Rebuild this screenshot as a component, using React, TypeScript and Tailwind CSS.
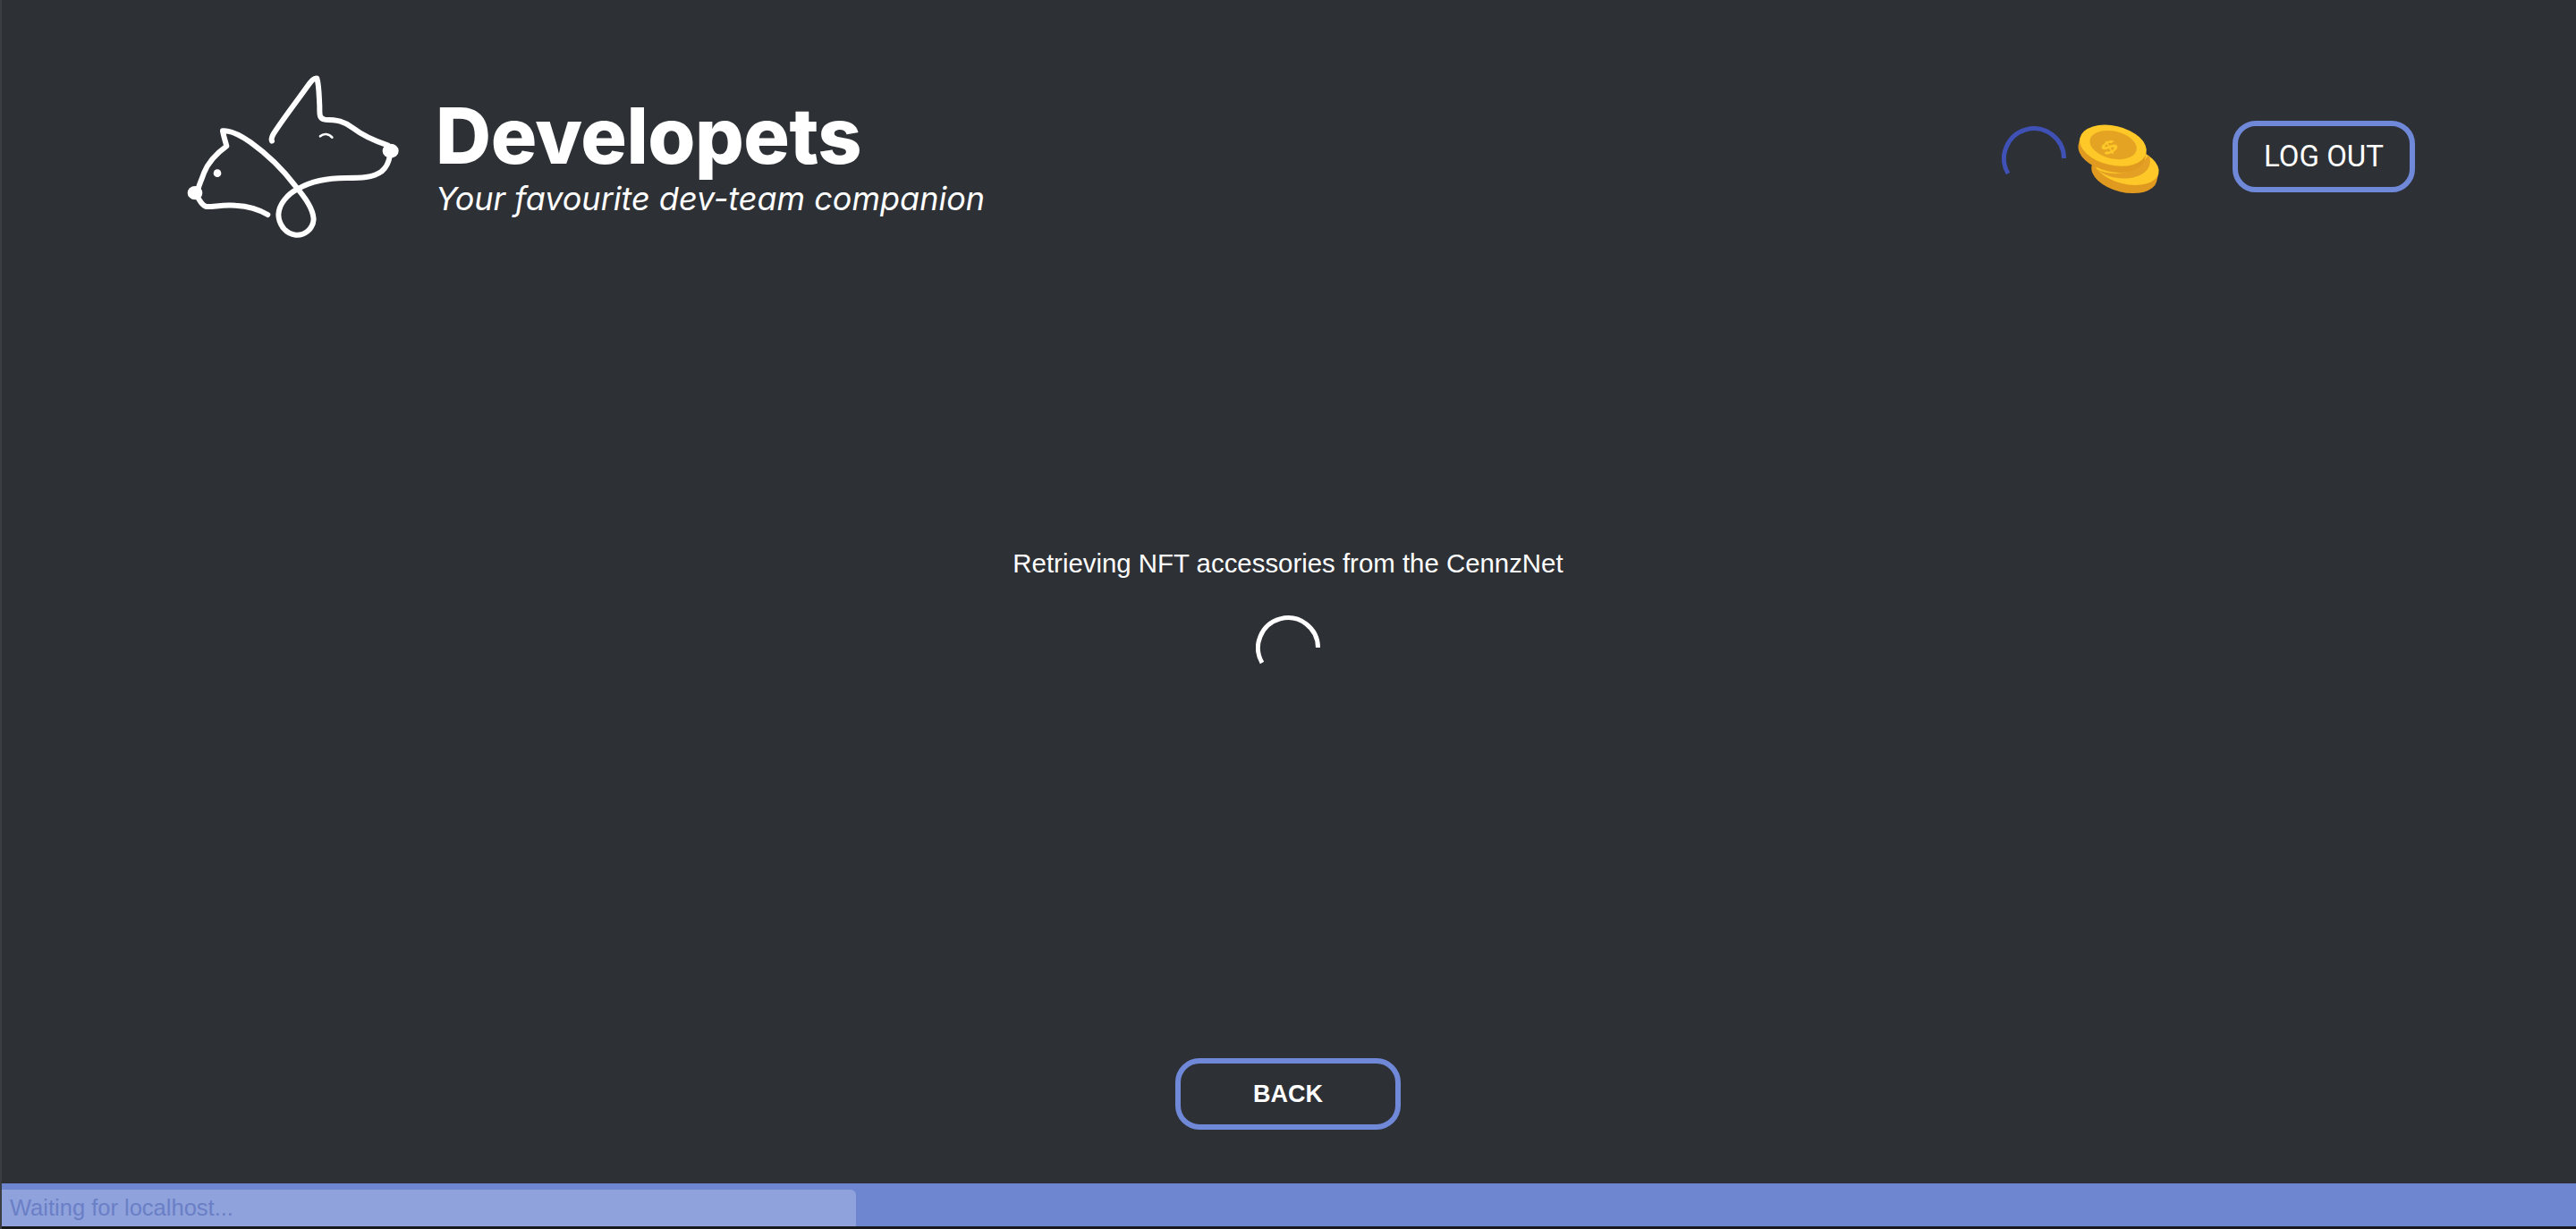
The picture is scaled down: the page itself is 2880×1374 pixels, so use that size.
import React from 'react';

const Logo = () => (
  <svg width="260" height="200" viewBox="0 0 780 600" fill="none" stroke="#fff" strokeLinecap="round" strokeLinejoin="round">
    <path
      d="M298 495C270 478 230 466 190 464C150 461 110 470 92 468C78 465 68 445 60 430C62 405 74 385 84 355C96 325 125 290 160 265C155 245 148 225 147 214C170 212 205 228 240 252C300 295 350 345 390 398C425 440 450 475 452 510C450 545 420 565 392 563C360 560 335 530 334 495C335 460 365 425 400 408C440 385 490 372 560 372C610 372 650 372 680 350C698 335 705 315 708 295"
      strokeWidth="18"
    />
    <path
      d="M700 262C665 250 620 232 585 205C555 182 530 176 490 176C470 172 472 160 472 130C470 95 470 60 463 38C455 35 445 45 430 66C390 122 345 180 316 226C310 238 310 244 312 248"
      strokeWidth="18"
    />
    <path d="M474 232C485 222 503 222 514 236" strokeWidth="8" />
    <circle cx="129" cy="356" r="13" fill="#fff" stroke="none" />
    <ellipse cx="54" cy="422" rx="25" ry="23" fill="#fff" stroke="none" />
    <ellipse cx="710" cy="281" rx="27" ry="24" fill="#fff" stroke="none" />
  </svg>
);

const Spinner = ({ color, width }: { color: string; width: number }) => (
  <svg width="72" height="72" viewBox="0 0 72 72" fill="none">
    <path d="M69.5 36A33.5 33.5 0 1 0 7 53" stroke={color} strokeWidth={width} />
  </svg>
);

const Coins = () => (
  <svg width="100" height="90" viewBox="0 0 300 270" fill="none">
    {/* back coin */}
    <g transform="rotate(14 170 170)">
      <path d="M58 165v28a112 62 0 0 0 224 0v-28z" fill="#e09a20" />
      <ellipse cx="170" cy="165" rx="112" ry="62" fill="#fdc828" />
    </g>
    <path d="M72 178C130 205 205 195 246 130C262 160 245 200 180 208C135 212 100 200 72 178Z" fill="#e3a024" />
    {/* front coin */}
    <g transform="rotate(13 127 100)">
      <path d="M13 98v22a114 66 0 0 0 228 0v-22z" fill="#e09a20" />
      <ellipse cx="127" cy="98" rx="114" ry="66" fill="#fdc828" />
      <ellipse cx="127" cy="96" rx="80" ry="46" fill="#e5a323" />
    </g>
    <text
      transform="translate(125 122) rotate(-30) scale(1.35 0.85)"
      fill="#fdc828"
      fontFamily="'Liberation Sans', sans-serif"
      fontWeight="700"
      fontSize="70"
      textAnchor="middle"
    >
      $
    </text>
  </svg>
);

export default function App() {
  return (
    <div className="flex h-screen flex-col overflow-hidden border-l-2 border-l-[#3a3d42] bg-[#2d3035] font-['Liberation_Sans',sans-serif] text-white">
      <header className="flex items-start justify-between pl-[198px] pr-[180px] pt-[75px]">
        <div className="flex items-start gap-[27px]">
          <Logo />
          <div className="pt-[29px]">
            <h1 className="font-['Inter',sans-serif] text-[86px] font-extrabold leading-[96px] tracking-[-0.5px]">Developets</h1>
            <p className="font-['Inter',sans-serif] text-[36px] italic leading-[44px]">Your favourite dev-team companion</p>
          </div>
        </div>
        <div className="flex items-center pt-[55px]">
          <div className="translate-y-[2px]">
            <Spinner color="#3f51b5" width={5} />
          </div>
          <div className="ml-[10px] mr-[76px]">
            <Coins />
          </div>
          <button className="h-20 w-[204px] rounded-[26px] border-[6px] border-[#6f88d8] pb-[2px] font-['Roboto',sans-serif] text-[33px] leading-none">
            LOG OUT
          </button>
        </div>
      </header>

      <main className="flex flex-1 flex-col items-center pr-[2px]">
        <p className="mt-[337px] text-[29.4px] leading-[36px]">Retrieving NFT accessories from the CennzNet</p>
        <div className="mt-[40px]">
          <Spinner color="#ffffff" width={5} />
        </div>
        <button className="mt-auto mb-[60px] h-20 w-[252px] rounded-[27px] border-[6px] border-[#6f88d8] text-[27px] font-bold">
          BACK
        </button>
      </main>

      <div className="h-[48px] bg-[#6e85d0] pt-[7px]">
        <div className="h-[41px] w-[955px] rounded-tr-[6px] bg-[#8fa2dc] pl-[9px] text-[25.5px] leading-[40px] text-[#6a7fc6]">
          Waiting for localhost...
        </div>
      </div>
      <div className="h-[3px] bg-[#18191c]" />
    </div>
  );
}
